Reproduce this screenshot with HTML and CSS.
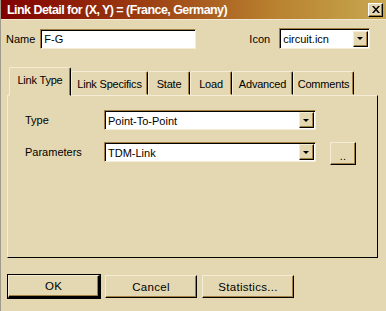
FILE: index.html
```html
<!DOCTYPE html>
<html>
<head>
<meta charset="utf-8">
<title>Link Detail</title>
<link rel="stylesheet" href="styles.css">
</head>
<body>
<div class="window">
  <div class="titlebar">
    <span class="title">Link Detail for (X, Y) = (France, Germany)</span>
    <span class="close">
      <svg width="8" height="7" viewBox="0 0 8 7"><path d="M0 0h2l2 2.5L6 0h2L5 3.5 8 7H6L4 4.5 2 7H0l3-3.5z" fill="#000"/></svg>
    </span>
  </div>

  <div class="content">
    <div class="toprow">
      <label class="lbl">Name</label>
      <div class="field name-field">F-G</div>
      <label class="lbl icon-lbl">Icon</label>
      <div class="field combo icon-combo">
        <span class="combo-text">circuit.icn</span>
        <span class="arrow"><i></i></span>
      </div>
    </div>

    <div class="tabs">
      <div class="tab active">Link Type</div>
      <div class="tab">Link Specifics</div>
      <div class="tab">State</div>
      <div class="tab">Load</div>
      <div class="tab">Advanced</div>
      <div class="tab">Comments</div>
    </div>
    <div class="panel">
      <div class="prow">
        <span class="plabel">Type</span>
        <div class="field combo wide">
          <span class="combo-text">Point-To-Point</span>
          <span class="arrow"><i></i></span>
        </div>
      </div>
      <div class="prow">
        <span class="plabel">Parameters</span>
        <div class="field combo wide">
          <span class="combo-text">TDM-Link</span>
          <span class="arrow"><i></i></span>
        </div>
        <div class="btn small">..</div>
      </div>
    </div>

    <div class="buttons">
      <div class="btn default">OK</div>
      <div class="btn">Cancel</div>
      <div class="btn">Statistics...</div>
    </div>
  </div>
</div>
</body>
</html>
```

FILE: styles.css
```css
body {
  margin: 0;
  font-family: "Liberation Sans", Arial, sans-serif;
  font-size: 11px;
  color: #000;
}

.window {
  width: 386px;
  height: 311px;
  background-color: #e4d8b2;
  border-left: 1px solid #a09a88;
  box-sizing: border-box;
  overflow: hidden;
}

.titlebar {
  height: 19px;
  background: linear-gradient(to right, #800000 0%, #9a3a10 35%, #b8802e 70%, #c8a850 100%);
  display: flex;
  align-items: center;
  justify-content: space-between;
  padding: 0 3px 0 6px;
  border-bottom: 1px solid #f0e8d0;
}

.title {
  color: #fff;
  font-weight: bold;
  font-size: 12.5px;
  letter-spacing: -0.55px;
  white-space: nowrap;
}

.close {
  width: 13px;
  height: 12px;
  background: #e4d8b2;
  border: 1px solid;
  border-color: #fff #000 #000 #fff;
  box-shadow: inset -1px -1px 0 #a08040;
  display: flex;
  align-items: center;
  justify-content: center;
}

.content {
  padding: 8px 8px 0 5px;
}

.toprow {
  display: flex;
  align-items: center;
  height: 21px;
}

.lbl {
  margin-right: 5px;
}

.icon-lbl {
  margin-left: 53px;
  margin-right: 9px;
}

.field {
  background: #fff;
  border: 1px solid;
  border-color: #a08040 #f4ecd4 #f4ecd4 #a08040;
  box-shadow: inset 1px 1px 0 #000;
  height: 20px;
  box-sizing: border-box;
  display: flex;
  align-items: center;
  padding-left: 3px;
  flex-shrink: 0;
}

.name-field {
  width: 156px;
}

.combo {
  justify-content: space-between;
  padding-right: 1px;
}

.combo-text {
  padding-top: 1px;
}

.icon-combo {
  width: 91px;
  height: 21px;
}

.arrow {
  width: 15px;
  height: 16px;
  background: #e4d8b2;
  border: 1px solid;
  border-color: #f4ecd4 #000 #000 #f4ecd4;
  box-shadow: inset -1px -1px 0 #a08040;
  box-sizing: border-box;
  display: flex;
  align-items: center;
  justify-content: center;
}

.arrow i {
  width: 0;
  height: 0;
  border-left: 3px solid transparent;
  border-right: 3px solid transparent;
  border-top: 3px solid #000;
  margin-left: -1px;
}

.tabs {
  display: flex;
  align-items: flex-end;
  margin-top: 18px;
  padding-left: 3px;
  height: 28px;
  position: relative;
  z-index: 1;
}

.tab {
  height: 24px;
  padding: 0;
  border: 1px solid;
  border-color: #f4ecd4 #000 transparent #f4ecd4;
  box-shadow: inset -1px 0 0 #a08040;
  border-radius: 2px 2px 0 0;
  display: flex;
  align-items: center;
  justify-content: center;
  box-sizing: border-box;
  white-space: nowrap;
  flex-shrink: 0;
  letter-spacing: -0.2px;
  padding-top: 1px;
}

.tab.active {
  width: 62px;
  height: 29px;
  margin-bottom: -1px;
  padding-top: 0;
  padding-bottom: 4px;
  background: #e4d8b2;
  border-color: #f4ecd4 #000 #e4d8b2 #f4ecd4;
}

.tab:nth-child(2) { width: 77px; }
.tab:nth-child(3) { width: 42px; }
.tab:nth-child(4) { width: 42px; }
.tab:nth-child(5) { width: 61px; }
.tab:nth-child(6) { width: 61px; }

.panel {
  width: 371px;
  height: 163px;
  box-sizing: border-box;
  border: 1px solid;
  border-color: #f4ecd4 #000 #000 #f4ecd4;
  margin-left: 1px;
  padding: 14px 0 0 17px;
}

.prow {
  display: flex;
  align-items: flex-start;
  margin-bottom: 12px;
  line-height: 20px;
}

.plabel {
  width: 79px;
}

.wide {
  width: 212px;
}

.btn {
  background: #e4d8b2;
  border: 1px solid;
  border-color: #f4ecd4 #000 #000 #f4ecd4;
  box-shadow: inset -1px -1px 0 #a08040;
  box-sizing: border-box;
  display: flex;
  align-items: center;
  justify-content: center;
  width: 92px;
  height: 23px;
  font-size: 11.5px;
  letter-spacing: 0.3px;
  flex-shrink: 0;
}

.btn.small {
  width: 26px;
  height: 23px;
  margin-left: 14px;
  font-size: 11px;
  padding-top: 4px;
}

.btn.default {
  outline: 1px solid #000;
  outline-offset: 0;
  border-width: 1px 2px 2px 1px;
}

.buttons {
  display: flex;
  gap: 5px;
  margin-top: 17px;
  padding-left: 2px;
}
```
